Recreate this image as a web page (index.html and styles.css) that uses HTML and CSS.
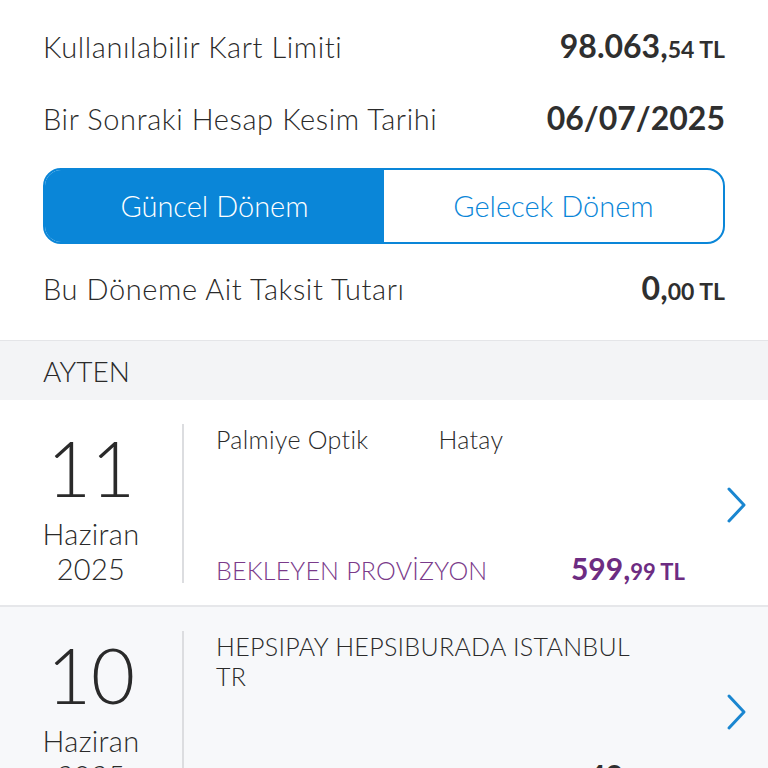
FILE: index.html
```html
<!DOCTYPE html>
<html lang="tr">
<head>
<meta charset="utf-8">
<link rel="stylesheet" href="styles.css">
</head>
<body>
<div class="top">
  <div class="row r1"><span class="label">Kullanılabilir Kart Limiti</span><span class="val"><span class="big">98.063,</span><span class="small">54 TL</span></span></div>
  <div class="row r2"><span class="label">Bir Sonraki Hesap Kesim Tarihi</span><span class="val"><span class="big">06/07/2025</span></span></div>
  <div class="seg">
    <div class="seg-item active">Güncel Dönem</div>
    <div class="seg-item">Gelecek Dönem</div>
  </div>
  <div class="row r3"><span class="label">Bu Döneme Ait Taksit Tutarı</span><span class="val"><span class="big">0,</span><span class="small">00 TL</span></span></div>
</div>
<div class="owner"><span>AYTEN</span></div>
<div class="card">
  <div class="date"><div class="day">11</div><div class="mon">Haziran</div><div class="yr">2025</div></div>
  <div class="info">
    <div class="merchant"><span>Palmiye Optik</span><span class="city">Hatay</span></div>
    <div class="bottom"><span class="status">BEKLEYEN PROVİZYON</span><span class="amt"><span class="big">599,</span><span class="small">99 TL</span></span></div>
  </div>
  <svg class="chev" width="22" height="38" viewBox="0 0 22 38"><path d="M3 3 L18 19 L3 35" fill="none" stroke="#1a86d0" stroke-width="3" stroke-linecap="round" stroke-linejoin="round"/></svg>
</div>
<div class="card alt">
  <div class="date"><div class="day">10</div><div class="mon">Haziran</div><div class="yr">2025</div></div>
  <div class="info">
    <div class="merchant m2">HEPSIPAY HEPSIBURADA ISTANBUL<br>TR</div>
    <div class="bottom"><span class="status"></span><span class="amt dark"><span class="big">49,</span><span class="small">90 TL</span></span></div>
  </div>
  <svg class="chev" width="22" height="38" viewBox="0 0 22 38"><path d="M3 3 L18 19 L3 35" fill="none" stroke="#1a86d0" stroke-width="3" stroke-linecap="round" stroke-linejoin="round"/></svg>
</div>
</body>
</html>
```
FILE: styles.css
```css
html, body { margin: 0; padding: 0; }
body {
  width: 768px; height: 768px; overflow: hidden;
  font-family: "Lato", "Open Sans", sans-serif;
  color: #2a2a2a;
  background: #fff;
}
.top { padding: 0 43px 0 43px; }
.row {
  display: flex; justify-content: space-between; align-items: baseline;
}
.label { font-size: 29px; font-weight: 300; letter-spacing: 0.6px; }
.val { font-weight: 700; color: #2f2f2f; }
.big { font-size: 32px; font-weight: 700; }
.small { font-size: 23px; font-weight: 700; }
.r1 { padding-top: 26px; height: 40px; }
.r2 { padding-top: 32px; height: 40px; }
.seg {
  margin-top: 30px;
  height: 72px;
  border: 2px solid #0a86d8;
  border-radius: 18px;
  display: flex; overflow: hidden;
}
.seg-item {
  flex: 1; display: flex; align-items: center; justify-content: center;
  font-size: 29px; font-weight: 300; color: #0a86d8; padding-bottom: 2px;
}
.seg-item.active { background: #0a86d8; color: #fff; }
.r3 { padding-top: 24px; height: 72px; }
.owner {
  background: #f3f4f6; border-top: 1px solid #e4e5e8;
  height: 59px; padding-left: 43px;
  display: flex; align-items: center;
  font-size: 28px; font-weight: 300; color: #2a2a2a;
}
.card {
  display: flex; background: #fff; height: 205px;
  border-bottom: 2px solid #e6e7ea;
  position: relative;
}
.card.alt { background: #f7f8fa; }
.date {
  width: 182px; display: flex; flex-direction: column; align-items: center;
  padding-top: 28px; box-sizing: border-box;
}
.day { font-size: 76px; font-weight: 300; line-height: 80px; }
.mon, .yr { font-size: 29px; font-weight: 300; line-height: 35px; letter-spacing: 0.3px; }
.mon { margin-top: 8px; }
.info {
  flex: 1; border-left: 2px solid #dcdde0; margin: 24px 0 22px 0;
  padding-left: 32px; display: flex; flex-direction: column; justify-content: space-between;
}
.merchant { font-size: 25px; font-weight: 300; margin-top: 0; line-height: 30px; letter-spacing: 0.3px; }
.merchant .city { margin-left: 70px; }
.bottom { display: flex; align-items: baseline; width: 469px; justify-content: space-between; margin-bottom: -3px; }
.status { font-size: 25px; font-weight: 300; color: #7a3a8a; letter-spacing: 0.2px; }
.amt { color: #6d2c82; }
.amt.dark { color: #2f2f2f; }
.amt .big { font-size: 30px; }
.amt .small { font-size: 22px; }
.chev { position: absolute; right: 20px; top: 86px; }
```
